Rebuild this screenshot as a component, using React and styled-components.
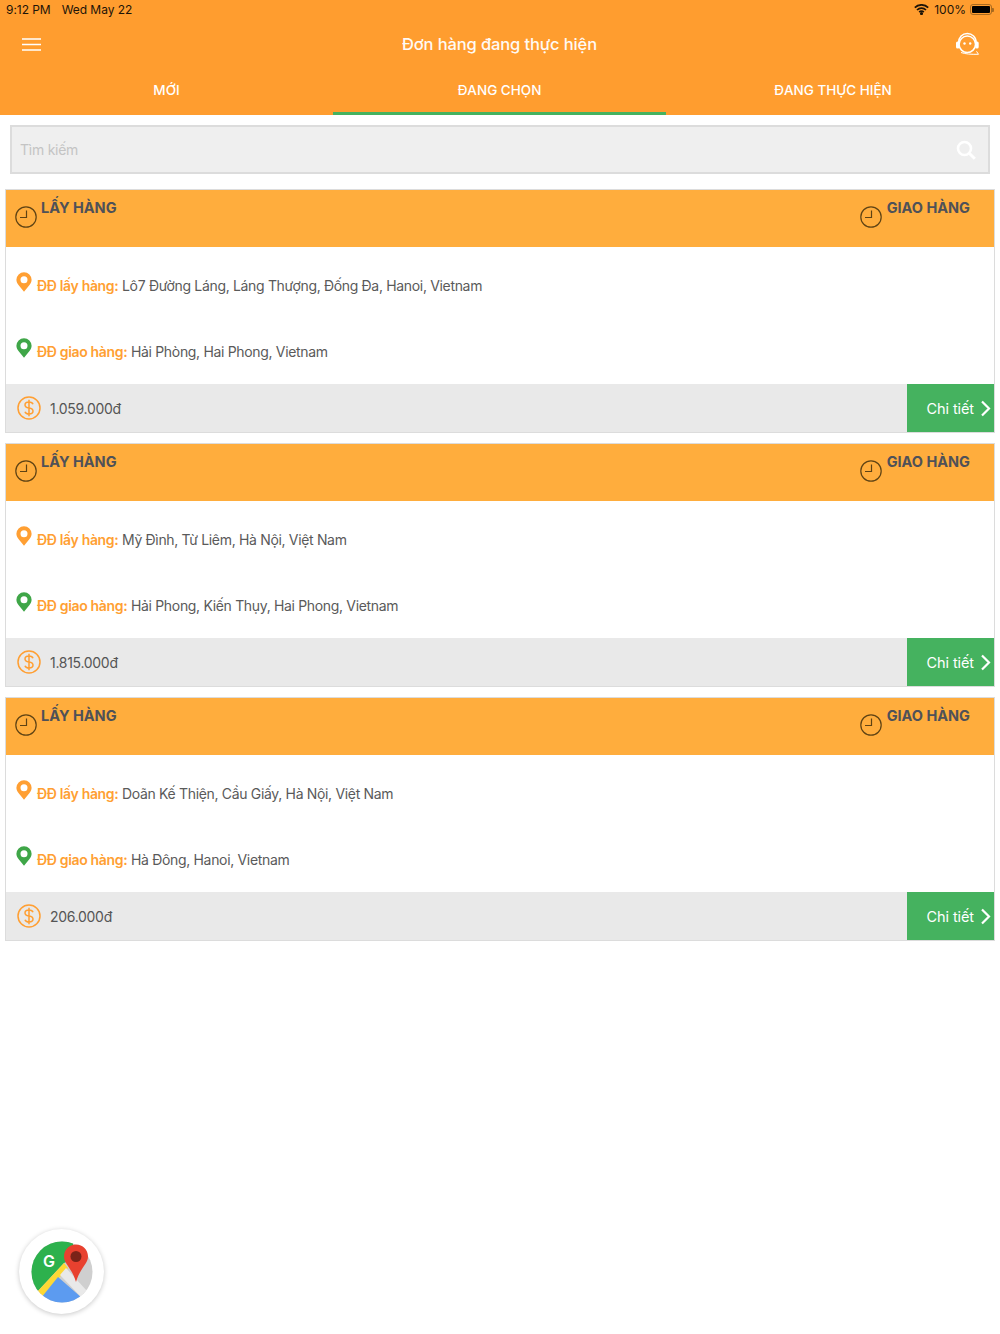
import React from 'react'
import styled, { createGlobalStyle } from 'styled-components'

const Global = createGlobalStyle`
    html, body {
        margin: 0;
        padding: 0;
        background: #fff;
        font-family: Inter, "Liberation Sans", sans-serif;
    }
`

const Page = styled.div`
    position: relative;
    width: 1000px;
    height: 1334px;
    overflow: hidden;
    background: #fff;
`

const Top = styled.header`
    background: #ff9d2f;
    height: 115px;
    display: flex;
    flex-direction: column;
`

const StatusBar = styled.div`
    height: 20px;
    padding: 0 5px 2px 6px;
    box-sizing: border-box;
    display: flex;
    align-items: center;
    font-size: 12px;
    color: #1d1408;
`

const StatusLeft = styled.span`
    display: flex;
    gap: 11px;
    flex: 1;
    letter-spacing: -0.05px;
`

const StatusRight = styled.span`
    display: flex;
    align-items: center;
    gap: 5px;
`

const Battery = styled.span`
    position: relative;
    width: 22px;
    height: 11px;
    box-sizing: border-box;
    border: 1px solid #a86a1f;
    border-radius: 3px;
    padding: 1px;
    margin: 0 3px 0 -1px;
    &::before {
        content: '';
        display: block;
        height: 100%;
        background: #000;
        border-radius: 1px;
    }
    &::after {
        content: '';
        position: absolute;
        right: -3px;
        top: 3px;
        width: 2px;
        height: 4px;
        background: #a86a1f;
        border-radius: 0 1px 1px 0;
    }
`

const NavBar = styled.div`
    height: 48px;
    display: grid;
    grid-template-columns: 1fr auto 1fr;
    align-items: center;
    padding: 0 20px 0 19px;
    svg:first-child {
        margin-left: 3px;
    }
    svg:last-child {
        justify-self: end;
    }
`

const Title = styled.h1`
    margin: 0;
    font-size: 16.5px;
    font-weight: 500;
    letter-spacing: -0.12px;
    color: #fff;
    opacity: 0.95;
`

const Tabs = styled.nav`
    flex: 1;
    display: grid;
    grid-template-columns: 333px 333px 334px;
`

const Tab = styled.div`
    display: flex;
    align-items: center;
    justify-content: center;
    font-size: 13.5px;
    font-weight: 500;
    color: #fff;
    box-sizing: border-box;
    border-bottom: 3px solid ${props => (props.$active ? '#45b25f' : 'transparent')};
`

const Content = styled.main`
    padding: 10px 5px 0;
    display: flex;
    flex-direction: column;
`

const Search = styled.div`
    margin: 0 5px 15px;
    height: 49px;
    box-sizing: border-box;
    background: #efefef;
    border: 2px solid #dcdcdc;
    display: flex;
    align-items: center;
    justify-content: space-between;
    padding: 0 12px 0 8px;
    font-size: 14px;
    letter-spacing: -0.25px;
    color: #c4c4c4;
`

const Card = styled.article`
    height: 244px;
    margin-bottom: 10px;
    box-sizing: border-box;
    border: 1px solid #dcdcdc;
    display: flex;
    flex-direction: column;
    background: #fff;
`

const CardHead = styled.div`
    height: 57px;
    flex: none;
    background: #ffad3d;
    display: flex;
    justify-content: space-between;
    padding: 0 24px 0 9px;
`

const HeadItem = styled.div`
    display: flex;
    gap: ${props => props.$gap}px;
`

const ClockWrap = styled.span`
    margin-top: 16px;
    height: 22px;
`

const HeadLabel = styled.span`
    margin-top: 9px;
    font-size: 14.5px;
    line-height: 18px;
    font-weight: 700;
    color: #4f5158;
`

const CardBody = styled.div`
    flex: 1;
    padding: 25px 0 0 10px;
    display: flex;
    flex-direction: column;
    gap: 44px;
`

const AddrRow = styled.div`
    height: 22px;
    display: flex;
    align-items: flex-start;
    gap: 5px;
    font-size: 14px;
    letter-spacing: -0.33px;
    color: #5a5a5a;
`

const AddrText = styled.span`
    margin-top: 4px;
    line-height: 20px;
`

const AddrLabel = styled.b`
    font-weight: 600;
    color: #ff9f33;
`

const CardFoot = styled.div`
    height: 48px;
    flex: none;
    background: #e9e9e9;
    display: flex;
    align-items: center;
    padding-left: 11px;
    font-size: 14px;
    letter-spacing: -0.3px;
    color: #555;
`

const Price = styled.span`
    flex: 1;
    margin-left: 9px;
`

const DetailBtn = styled.div`
    width: 87px;
    height: 48px;
    background: #45b25f;
    color: #fff;
    display: flex;
    align-items: center;
    justify-content: flex-end;
    gap: 6px;
    padding-right: 3px;
    box-sizing: border-box;
    font-size: 14.5px;
    letter-spacing: -0.1px;
`

const MapsFab = styled.div`
    position: absolute;
    left: 19px;
    top: 1229px;
    width: 85px;
    height: 85px;
    border-radius: 50%;
    background: #fff;
    box-shadow: 0 1px 5px rgba(0, 0, 0, 0.22);
    display: flex;
    align-items: center;
    justify-content: center;
`

const Hamburger = () => (
    <svg width="19" height="13" viewBox="0 0 19 13" stroke="#fff" strokeWidth="1.700">
        <path d="M0 1h19M0 6.500h19M0 12h19" />
    </svg>
)

const Clock = () => (
    <svg width="22" height="22" viewBox="0 0 22 22" fill="none" stroke="#5f4314" strokeWidth="1.200">
        <circle cx="11" cy="11" r="10.200" />
        <path d="M11.500 4.500v7H5" />
    </svg>
)

const Pin = ({ color }) => (
    <svg width="16" height="20" viewBox="0 0 16 20">
        <path
            fillRule="evenodd"
            fill={color}
            d="M8 .2a7.600 7.600 0 0 0-7.600 7.600c0 2.200 1 3.800 2.300 5.400L8 19.800l5.300-6.600c1.300-1.600 2.300-3.200 2.300-5.400A7.600 7.600 0 0 0 8 .2zm0 4a3.500 3.500 0 1 1 0 7 3.500 3.500 0 0 1 0-7z"
        />
    </svg>
)

const Dollar = () => (
    <svg width="24" height="24" viewBox="0 0 24 24" fill="none" stroke="#ff9f33" strokeWidth="1.500">
        <circle cx="12" cy="12" r="11" />
        <path d="M16 8.200c-.5-1.500-2-2.200-4-2.200-2.300 0-4 1-4 3s1.700 2.600 4 3 4 1 4 3-1.700 3-4 3c-2 0-3.500-.8-4-2.300M12 3.800v16.400" />
    </svg>
)

const Chevron = () => (
    <svg width="11" height="17" viewBox="0 0 11 17" fill="none" stroke="#fff" strokeWidth="2.200">
        <path d="M2 1.500l7 7-7 7" />
    </svg>
)

const SearchIcon = () => (
    <svg width="20" height="20" viewBox="0 0 20 20" fill="none" stroke="#fff" strokeWidth="2.600">
        <circle cx="8.500" cy="8.500" r="6.500" />
        <path d="M13.500 13.500l5.300 5.300" strokeWidth="3" />
    </svg>
)

const Wifi = () => (
    <svg width="15" height="11" viewBox="0 0 15 11" fill="none" stroke="#1d1408" strokeWidth="1.700">
        <path d="M.8 3.600a9.500 9.500 0 0 1 13.400 0M3 6a6.300 6.300 0 0 1 9 0M5.200 8.200a3.200 3.200 0 0 1 4.600 0" />
        <circle cx="7.500" cy="9.600" r=".7" fill="#1d1408" />
    </svg>
)

const Support = () => (
    <svg width="25" height="25" viewBox="0 0 25 25" fill="none" stroke="#fff">
        <path strokeWidth="1.500" d="M3.500 11C3.500 5 7.500 1.500 12.300 1.500S21.200 5 21.200 11" />
        <circle cx="12.300" cy="12.300" r="8.200" strokeWidth="1.500" />
        <rect x="1" y="9.500" width="3.500" height="7" rx="1.500" fill="#fff" stroke="none" />
        <rect x="20.200" y="9.500" width="3.500" height="7" rx="1.500" fill="#fff" stroke="none" />
        <path strokeWidth="1" d="M6 20.500c4 1.500 10 2 17.500 1.800l-2-3" />
        <circle cx="9.500" cy="11.500" r="1.200" fill="#fff" stroke="none" />
        <circle cx="15.200" cy="11.500" r="1.200" fill="#fff" stroke="none" />
    </svg>
)

const MapsLogo = () => (
    <svg width="62" height="62" viewBox="0 0 62 62">
        <defs>
            <clipPath id="mapsDisc">
                <circle cx="31" cy="31" r="30.500" />
            </clipPath>
        </defs>
        <g clipPath="url(#mapsDisc)">
            <rect width="62" height="62" fill="#cfcfcf" />
            <path d="M0 0H42V18L33 22 6 51 0 60z" fill="#2db14d" />
            <path d="M33 22 37 27 10 57 6 51z" fill="#fdd835" />
            <path d="M27 36 51 57 45 66H5L10 57z" fill="#5c9bf0" />
            <path d="M29 34 35 27 56 50 51 57z" fill="#e9e9e9" />
            <text x="12" y="26" fontFamily="Inter, sans-serif" fontWeight="600" fontSize="16" fill="#fff">G</text>
        </g>
        <path d="M45 3.500c-6.800 0-12 5.200-12 12 0 7.500 8 11.500 12 25.500 4-14 12-18 12-25.500 0-6.800-5.200-12-12-12z" fill="#e8412f" />
        <circle cx="45" cy="15.500" r="5.500" fill="#7a2318" />
    </svg>
)

const orders = [
    { pick: 'Lô7 Đường Láng, Láng Thượng, Đống Đa, Hanoi, Vietnam', drop: 'Hải Phòng, Hai Phong, Vietnam', price: '1.059.000đ' },
    { pick: 'Mỹ Đình, Từ Liêm, Hà Nội, Việt Nam', drop: 'Hải Phong, Kiến Thụy, Hai Phong, Vietnam', price: '1.815.000đ' },
    { pick: 'Doãn Kế Thiện, Cầu Giấy, Hà Nội, Việt Nam', drop: 'Hà Đông, Hanoi, Vietnam', price: '206.000đ' },
]

const OrderCard = ({ order }) => (
    <Card>
        <CardHead>
            <HeadItem $gap={4}>
                <ClockWrap><Clock /></ClockWrap>
                <HeadLabel>LẤY HÀNG</HeadLabel>
            </HeadItem>
            <HeadItem $gap={5}>
                <ClockWrap><Clock /></ClockWrap>
                <HeadLabel>GIAO HÀNG</HeadLabel>
            </HeadItem>
        </CardHead>
        <CardBody>
            <AddrRow>
                <Pin color="#ff9f33" />
                <AddrText><AddrLabel>ĐĐ lấy hàng:</AddrLabel> {order.pick}</AddrText>
            </AddrRow>
            <AddrRow>
                <Pin color="#3fa648" />
                <AddrText><AddrLabel>ĐĐ giao hàng:</AddrLabel> {order.drop}</AddrText>
            </AddrRow>
        </CardBody>
        <CardFoot>
            <Dollar />
            <Price>{order.price}</Price>
            <DetailBtn>Chi tiết <Chevron /></DetailBtn>
        </CardFoot>
    </Card>
)

export default function App() {
    return (
        <Page>
            <Global />
            <Top>
                <StatusBar>
                    <StatusLeft><span>9:12 PM</span><span>Wed May 22</span></StatusLeft>
                    <StatusRight><Wifi />100%<Battery /></StatusRight>
                </StatusBar>
                <NavBar>
                    <Hamburger />
                    <Title>Đơn hàng đang thực hiện</Title>
                    <Support />
                </NavBar>
                <Tabs>
                    <Tab>MỚI</Tab>
                    <Tab $active>ĐANG CHỌN</Tab>
                    <Tab>ĐANG THỰC HIỆN</Tab>
                </Tabs>
            </Top>
            <Content>
                <Search>
                    <span>Tìm kiếm</span>
                    <SearchIcon />
                </Search>
                {orders.map(order => <OrderCard key={order.price} order={order} />)}
            </Content>
            <MapsFab><MapsLogo /></MapsFab>
        </Page>
    )
}
